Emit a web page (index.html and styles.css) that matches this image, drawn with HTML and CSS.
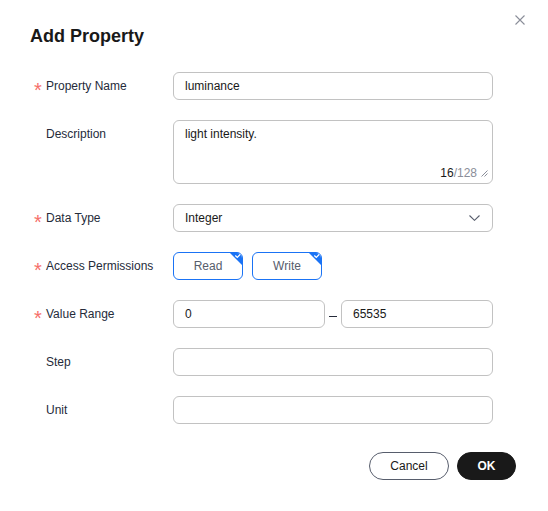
FILE: index.html
```html
<!DOCTYPE html>
<html lang="en">
<head>
  <meta charset="UTF-8" />
  <title>Add Property</title>
  <link rel="stylesheet" href="styles.css">
</head>
<body>
  <div class="dialog">
    <button class="close-btn" aria-label="Close">
      <svg width="10" height="10" viewBox="0 0 10 10"><path d="M0.5 0.5 L9.5 9.5 M9.5 0.5 L0.5 9.5" stroke="#8a8e99" stroke-width="1.1" fill="none"/></svg>
    </button>
    <h1 class="title">Add Property</h1>

    <div class="form">
      <div class="row">
        <label class="label"><span class="req">*</span>Property Name</label>
        <div class="field"><div class="input">luminance</div></div>
      </div>

      <div class="row">
        <label class="label"><span class="req"></span>Description</label>
        <div class="field">
          <div class="textarea">
            <div class="textarea-text">light intensity.</div>
            <div class="counter">
              <span class="count-now">16</span><span class="count-max">/128</span>
              <svg class="resize" width="8" height="8" viewBox="0 0 8 8"><path d="M7.5 1.5 L1.5 7.5 M7.5 4.5 L4.5 7.5" stroke="#8a8e99" stroke-width="1" fill="none"/></svg>
            </div>
          </div>
        </div>
      </div>

      <div class="row">
        <label class="label"><span class="req">*</span>Data Type</label>
        <div class="field">
          <div class="input select">
            <span>Integer</span>
            <svg width="11" height="6" viewBox="0 0 11 6"><path d="M0.5 0.5 L5.5 5.3 L10.5 0.5" stroke="#575d6c" stroke-width="1.1" fill="none"/></svg>
          </div>
        </div>
      </div>

      <div class="row">
        <label class="label"><span class="req">*</span>Access Permissions</label>
        <div class="field chips">
          <div class="chip">Read
            <svg class="chip-mark" width="14" height="14" viewBox="0 0 14 14"><path d="M0 0 H14 V14 Z" fill="#1a73f5"/><path d="M6.3 3.6 L8.3 5.4 L11.6 2" stroke="#fff" stroke-width="1.3" fill="none"/></svg>
          </div>
          <div class="chip">Write
            <svg class="chip-mark" width="14" height="14" viewBox="0 0 14 14"><path d="M0 0 H14 V14 Z" fill="#1a73f5"/><path d="M6.3 3.6 L8.3 5.4 L11.6 2" stroke="#fff" stroke-width="1.3" fill="none"/></svg>
          </div>
        </div>
      </div>

      <div class="row">
        <label class="label"><span class="req">*</span>Value Range</label>
        <div class="field range">
          <div class="input">0</div>
          <span class="dash"></span>
          <div class="input">65535</div>
        </div>
      </div>

      <div class="row">
        <label class="label"><span class="req"></span>Step</label>
        <div class="field"><div class="input"></div></div>
      </div>

      <div class="row">
        <label class="label"><span class="req"></span>Unit</label>
        <div class="field"><div class="input"></div></div>
      </div>
    </div>

    <div class="footer">
      <button class="btn cancel-btn">Cancel</button>
      <button class="btn ok-btn">OK</button>
    </div>
  </div>
</body>
</html>
```

FILE: styles.css
```css
body {
  margin: 0;
  background: #ffffff;
  font-family: "Liberation Sans", Arial, sans-serif;
  color: #252b3a;
}
.dialog {
  position: relative;
  width: 548px;
  height: 511px;
  box-sizing: border-box;
  padding: 24px 32px 0 30px;
  background: #ffffff;
}
.close-btn {
  position: absolute;
  top: 15px;
  right: 23px;
  padding: 0;
  border: none;
  background: none;
  line-height: 0;
  cursor: pointer;
}
.title {
  margin: 0 0 24px;
  font-size: 18px;
  line-height: 24px;
  font-weight: bold;
  color: #191919;
}
.row {
  display: flex;
  margin-bottom: 20px;
}
.label {
  width: 143px;
  height: 28px;
  display: flex;
  font-size: 12px;
  line-height: 28px;
  color: #252b3a;
}
.req {
  width: 16px;
  height: 28px;
  text-align: center;
  color: #f66f6a;
  font-size: 20px;
  line-height: 28px;
  transform: translateY(4px);
}
.field {
  width: 320px;
}
.input {
  box-sizing: border-box;
  height: 28px;
  border: 1px solid #c2c2c2;
  border-radius: 6px;
  padding: 0 11px;
  font-size: 12px;
  line-height: 26px;
  color: #191919;
}
.select {
  display: flex;
  justify-content: space-between;
  align-items: center;
  padding-right: 12px;
}
.textarea {
  box-sizing: border-box;
  height: 64px;
  display: flex;
  flex-direction: column;
  border: 1px solid #c2c2c2;
  border-radius: 6px;
  padding: 5px 4px 2px 11px;
  font-size: 12px;
  line-height: 16px;
  color: #191919;
}
.textarea-text {
  flex: 1;
}
.counter {
  display: flex;
  justify-content: flex-end;
  align-items: center;
  gap: 3px;
  font-size: 12px;
  line-height: 16px;
}
.count-now {
  color: #191919;
  margin-right: -3px;
}
.count-max {
  color: #8a8e99;
}
.chips {
  display: flex;
  gap: 9px;
}
.chip {
  position: relative;
  box-sizing: border-box;
  width: 70px;
  height: 28px;
  border: 1px solid #1a73f5;
  border-radius: 6px;
  overflow: hidden;
  text-align: center;
  font-size: 12px;
  line-height: 26px;
  color: #575d6c;
}
.chip-mark {
  position: absolute;
  top: -1px;
  right: -1px;
}
.range {
  display: flex;
  align-items: center;
}
.range .input {
  width: 152px;
}
.dash {
  width: 8px;
  height: 1px;
  background: #252b3a;
  margin: 4px 4px 0;
}
.footer {
  display: flex;
  justify-content: flex-end;
  gap: 8px;
  margin-top: 28px;
}
.btn {
  box-sizing: border-box;
  height: 28px;
  border-radius: 14px;
  font-family: "Liberation Sans", Arial, sans-serif;
  font-size: 12px;
  cursor: pointer;
}
.cancel-btn {
  width: 80px;
  background: #ffffff;
  border: 1px solid #575d6c;
  color: #191919;
}
.ok-btn {
  width: 59px;
  background: #191919;
  border: 1px solid #191919;
  color: #ffffff;
  font-weight: bold;
}
```
